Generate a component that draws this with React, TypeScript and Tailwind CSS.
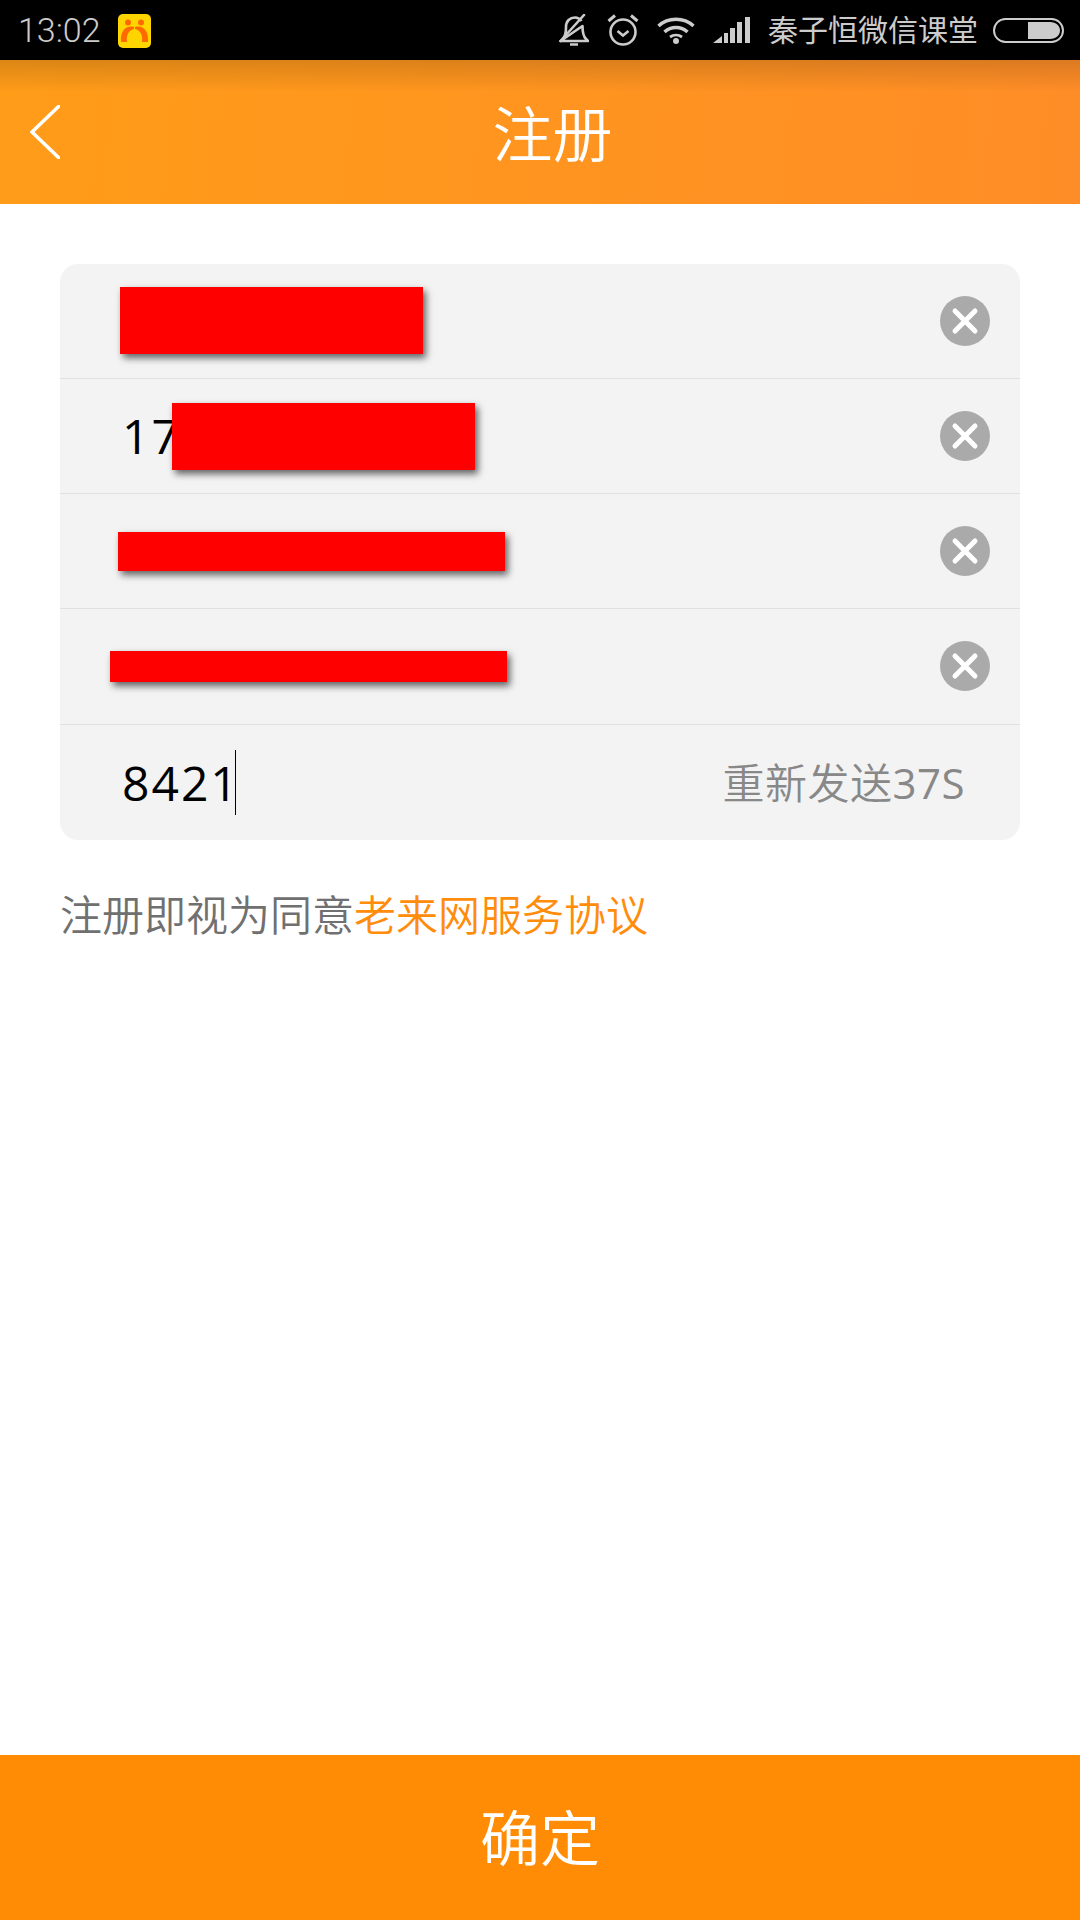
import React from 'react';

const ClearIcon = () => (
  <svg width="50" height="50" viewBox="0 0 50 50" className="shrink-0">
    <circle cx="25" cy="25" r="25" fill="#aaaaaa" />
    <path d="M15 15 L35 35 M35 15 L15 35" stroke="#fff" strokeWidth="5" strokeLinecap="round" />
  </svg>
);

const Redacted = ({ className }: { className: string }) => (
  <div className={`shrink-0 bg-[#ff0000] shadow-[3px_4px_7px_rgba(0,0,0,0.6)] ${className}`} />
);

const StatusIcons = () => (
  <>
    {/* bell off */}
    <svg width="30" height="32" viewBox="0 0 30 32" fill="none" stroke="#cccccc" strokeWidth="2.6">
      <path d="M4 25 C7 21 7 18 7 13 C7 7 11 3.500 16 3.500 C19 3.500 21 5 22.500 7 M23.500 12 C23.500 18 24 22 27 25 L29 27 L1.500 27 Z" strokeLinejoin="round" />
      <path d="M1.500 27 L25 1" strokeLinecap="round" />
      <path d="M11 30.500 L19 30.500" strokeWidth="2.500" />
    </svg>
    {/* alarm */}
    <svg width="32" height="32" viewBox="0 0 32 32" fill="none" stroke="#cccccc" strokeWidth="2.6">
      <circle cx="16" cy="18" r="12.500" />
      <path d="M10.500 17 L16 21.500 L21.500 17" />
      <path d="M1.500 7 L8 1.500 M30.500 7 L24 1.500" strokeWidth="3" />
    </svg>
    {/* wifi */}
    <svg width="38" height="27" viewBox="0 0 38 27" fill="none" stroke="#cccccc" strokeWidth="3.4">
      <path d="M1.500 9 C11 0 27 0 36.500 9" />
      <path d="M7.500 15 C14 9 24 9 30.500 15" />
      <path d="M13 20 C16.500 17.500 21.500 17.500 25 20" strokeWidth="2.800" />
      <circle cx="19" cy="24" r="3" fill="#cccccc" stroke="none" />
    </svg>
    {/* signal */}
    <svg width="37" height="26" viewBox="0 0 37 26" fill="#cccccc">
      <path d="M0 26 L9 19 L9 26 Z" />
      <rect x="11" y="16" width="4" height="10" />
      <rect x="17" y="11" width="5" height="15" />
      <rect x="24" y="5" width="5" height="21" />
      <rect x="32" y="0" width="5" height="26" />
    </svg>
  </>
);

export default function App() {
  return (
    <div className="flex h-[1920px] w-[1080px] flex-col overflow-hidden bg-white font-['Open_Sans','Noto_Sans_CJK_SC',sans-serif]">
      {/* Status bar */}
      <div className="flex h-[60px] shrink-0 items-center bg-black pl-[18px] pr-[16px] text-[#cccccc]">
        <span className="font-['Roboto',sans-serif] text-[34px] font-light leading-none">13:02</span>
        <svg width="33" height="34" viewBox="0 0 33 34" className="ml-[17px] mt-[1px]">
          <rect width="33" height="34" rx="5" fill="#ffd500" />
          <circle cx="10" cy="8.500" r="3" fill="#ff6a00" />
          <circle cx="23" cy="8.500" r="3" fill="#ff6a00" />
          <path d="M16 13 C8 11 2 17 3 28 L9 28 C8 21 11 16 16 15 Z" fill="#ff6a00" />
          <path d="M17 13 C25 11 31 17 30 28 L24 28 C25 21 22 16 17 15 Z" fill="#ff6a00" />
        </svg>
        <div className="ml-auto flex items-center gap-[18px]">
          <StatusIcons />
          <span className="text-[30px] leading-none">秦子恒微信课堂</span>
          <svg width="71" height="25" viewBox="0 0 71 25" fill="none" className="ml-[-3px]">
            <rect x="1" y="1" width="69" height="23" rx="11.500" stroke="#cccccc" strokeWidth="2" />
            <path d="M35 4 L57 4 C63 4 67 8 67 12.500 C67 17 63 21 57 21 L35 21 Z" fill="#cccccc" />
          </svg>
        </div>
      </div>

      {/* Header */}
      <div className="flex h-[144px] shrink-0 items-center bg-[linear-gradient(to_bottom,rgba(0,0,0,0.14),rgba(0,0,0,0)_32px),linear-gradient(95deg,#ff9c18,#ff8d27)] pl-[30px] pr-[35px]">
        <svg width="30" height="54" viewBox="0 0 30 54" fill="none" className="shrink-0">
          <path d="M29 1 L2 27 L29 53" stroke="#fff" strokeWidth="3.5" strokeLinecap="round" />
        </svg>
        <h1 className="flex-1 pt-[4px] text-center text-[60px] font-[350] leading-none text-white">注册</h1>
      </div>

      {/* Form */}
      <div className="flex flex-1 flex-col px-[60px] pt-[60px]">
        <div className="flex flex-col rounded-[18px] bg-[#f3f3f3]">
          <div className="flex h-[115px] items-center justify-between border-b border-[#e0e0e0] pl-[60px] pr-[30px]">
            <Redacted className="mb-[1px] h-[67px] w-[303px]" />
            <ClearIcon />
          </div>
          <div className="flex h-[115px] items-center justify-between border-b border-[#e0e0e0] pl-[62px] pr-[30px]">
            <div className="flex items-center">
              <span className="w-[50px] text-[48px] leading-none tracking-[2px] text-black">17</span>
              <Redacted className="h-[67px] w-[303px]" />
            </div>
            <ClearIcon />
          </div>
          <div className="flex h-[115px] items-center justify-between border-b border-[#e0e0e0] pl-[58px] pr-[30px]">
            <Redacted className="h-[39px] w-[387px]" />
            <ClearIcon />
          </div>
          <div className="flex h-[116px] items-center justify-between border-b border-[#e0e0e0] pb-[1px] pl-[50px] pr-[30px]">
            <Redacted className="h-[31px] w-[397px]" />
            <ClearIcon />
          </div>
          <div className="flex h-[115px] items-center justify-between pl-[62px] pr-[55px]">
            <div className="flex items-center">
              <span className="text-[48px] leading-none tracking-[2px] text-black">8421</span>
              <div className="ml-[-5px] h-[65px] w-[1px] bg-black" />
            </div>
            <span className="text-[42px] font-[350] leading-none tracking-[0.5px] text-[#888888]">
              重新发送<span className="font-normal">37S</span>
            </span>
          </div>
        </div>
        <p className="mt-[50px] text-[42px] font-[350] leading-[50px] text-[#707070]">
          注册即视为同意<span className="text-[#ff8c0a]">老来网服务协议</span>
        </p>
      </div>

      {/* Confirm button */}
      <button className="flex h-[165px] w-full shrink-0 items-center justify-center bg-[#ff8c04] text-[60px] font-[350] leading-none text-white">
        确定
      </button>
    </div>
  );
}
